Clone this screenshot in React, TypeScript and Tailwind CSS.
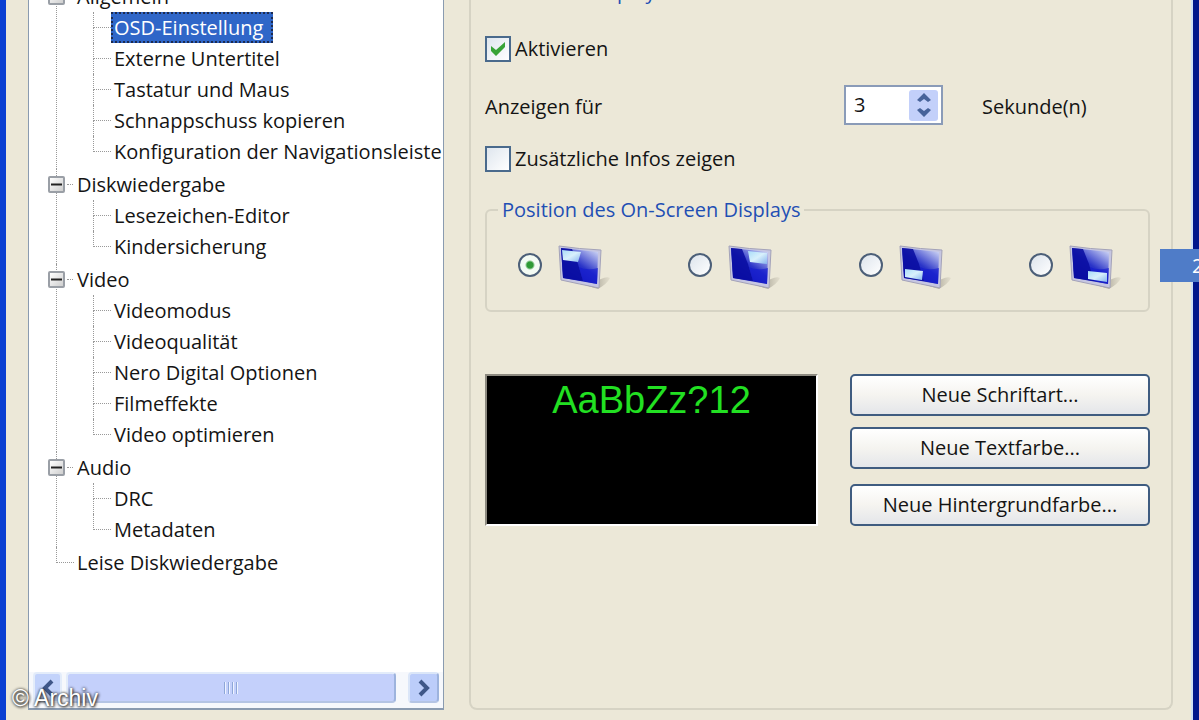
import { useState } from 'react'

type Corner = 'tl' | 'tr' | 'bl' | 'br'

type TreeGroup = { label: string; children: string[] }

const TREE: TreeGroup[] = [
  {
    label: 'Allgemein',
    children: [
      'OSD-Einstellung',
      'Externe Untertitel',
      'Tastatur und Maus',
      'Schnappschuss kopieren',
      'Konfiguration der Navigationsleiste',
    ],
  },
  { label: 'Diskwiedergabe', children: ['Lesezeichen-Editor', 'Kindersicherung'] },
  {
    label: 'Video',
    children: ['Videomodus', 'Videoqualität', 'Nero Digital Optionen', 'Filmeffekte', 'Video optimieren'],
  },
  { label: 'Audio', children: ['DRC', 'Metadaten'] },
]

const CORNERS: { value: Corner; label: string; patch: string }[] = [
  { value: 'tl', label: 'Oben links', patch: '5,6 24,8 21,18 6,16' },
  { value: 'tr', label: 'Oben rechts', patch: '21,7 40,9 40,20 23,18' },
  { value: 'bl', label: 'Unten links', patch: '7,25 25,27 24,36 7,33' },
  { value: 'br', label: 'Unten rechts', patch: '20,27 39,29 39,38 20,35' },
]

// Elbow of the dotted guide line in front of a tree entry
function Elbow({ last = false }: { last?: boolean }) {
  return (
    <span className="flex h-[31px] w-[18px] shrink-0 flex-col">
      <span className="h-4 border-b border-l border-dotted border-[#999]" />
      {!last && <span className="flex-1 border-l border-dotted border-[#999]" />}
    </span>
  )
}

function Monitor({ id, patch }: { id: Corner; patch: string }) {
  return (
    <svg width="54" height="54" viewBox="0 -6 54 54" aria-hidden="true">
      <defs>
        <linearGradient id={`screen-${id}`} x1="0.2" y1="1" x2="0.9" y2="0">
          <stop offset="0" stopColor="#0a0ca8" />
          <stop offset="0.5" stopColor="#2a34c8" />
          <stop offset="1" stopColor="#d3daf6" />
        </linearGradient>
        <linearGradient id={`patch-${id}`} x1="0" y1="0" x2="1" y2="1">
          <stop offset="0" stopColor="#a9dcf8" />
          <stop offset="0.5" stopColor="#d8f0fc" />
          <stop offset="1" stopColor="#86b4ee" />
        </linearGradient>
        <linearGradient id={`shade-${id}`} x1="0" y1="0" x2="1" y2="0">
          <stop offset="0" stopColor="#6f6b63" />
          <stop offset="1" stopColor="#c9c4b2" stopOpacity="0.3" />
        </linearGradient>
      </defs>
      <path d="M28 41 L44 35 Q50 32 53 34 Q50 40 41 45 Z" fill={`url(#shade-${id})`} />
      <path d="M2 2 Q22 5 44 6 L42 44 Q22 40 4 36 Z" fill="#c6c6e2" stroke="#a3a2b8" strokeWidth="1" />
      <path d="M4 4 L41 8 L40 40 L6 34 Z" fill={`url(#screen-${id})`} />
      <path d="M4 4 L15 5 L21 20 L26 37 L6 34 Z" fill="#080ca0" opacity="0.85" />
      <path d="M26 37 L40 40 L41 24 Q30 27 22 23 Z" fill="#1219d0" opacity="0.6" />
      <polygon points={patch} fill={`url(#patch-${id})`} />
    </svg>
  )
}

function CheckField({ label, checked, onChange }: { label: string; checked: boolean; onChange: (v: boolean) => void }) {
  return (
    <label className="flex w-fit items-center gap-1">
      <span className="grid">
        <input
          type="checkbox"
          checked={checked}
          onChange={(e) => onChange(e.target.checked)}
          className="size-[26px] appearance-none border-2 border-[#4a6a8c] bg-linear-to-br from-[#dfe6ee] to-white [grid-area:1/1]"
        />
        {checked && (
          <svg viewBox="0 0 26 26" className="pointer-events-none size-[26px] [grid-area:1/1]" aria-hidden="true">
            <path d="M6 10 L11 14 L20 6 L20 11 L11 20 L6 15 Z" fill="#37a336" />
          </svg>
        )}
      </span>
      {label}
    </label>
  )
}

const BUTTON =
  'h-[42px] w-full rounded-[5px] border-2 border-[#3f5c80] bg-linear-to-b from-white via-[#f5f4f0] to-[#e4e6ea]'

export default function App() {
  const [selected, setSelected] = useState('OSD-Einstellung')
  const [closed, setClosed] = useState<string[]>([])
  const [enabled, setEnabled] = useState(true)
  const [extra, setExtra] = useState(false)
  const [seconds, setSeconds] = useState(3)
  const [corner, setCorner] = useState<Corner>('tl')

  function toggle(label: string) {
    setClosed((prev) => (prev.includes(label) ? prev.filter((l) => l !== label) : [...prev, label]))
  }

  return (
    <main className="relative flex h-screen overflow-hidden border-l-[6px] border-[#0a3fd2] bg-[#ece8d8] font-['Open_Sans',sans-serif] text-[20px] leading-6 text-[#141414]">
      {/* Navigation tree */}
      <nav className="ml-[22px] mb-[10px] flex w-[416px] shrink-0 flex-col overflow-hidden border-x border-b-2 border-[#8a9bb0] bg-white">
        <ul className="-mt-[19px] flex-1 whitespace-nowrap pl-[27px]">
          {TREE.map((group) => (
            <li key={group.label} className="border-l border-dotted border-[#999] pb-0.5">
              <div className="-ml-[9px] flex h-[31px] items-center">
                <button
                  type="button"
                  aria-label={group.label}
                  onClick={() => toggle(group.label)}
                  className="grid size-[17px] place-items-center rounded-[2px] border-2 border-[#9a9fa6] bg-linear-to-br from-white to-[#cfcfcf]"
                >
                  <svg width="11" height="11" viewBox="0 0 11 11" aria-hidden="true">
                    <path d={closed.includes(group.label) ? 'M0 5.5 H11 M5.5 0 V11' : 'M0 5.5 H11'} stroke="#222" strokeWidth="2" />
                  </svg>
                </button>
                <span className="ml-0.5 w-[6px] border-b border-dotted border-[#999]" />
                <span className="ml-1">{group.label}</span>
              </div>
              {!closed.includes(group.label) && (
                <ul className="ml-[36px]">
                  {group.children.map((item, i) => (
                    <li key={item} className="flex items-center">
                      <Elbow last={i === group.children.length - 1} />
                      <button
                        type="button"
                        onClick={() => setSelected(item)}
                        className={
                          selected === item
                            ? 'h-[31px] border-2 border-dotted border-[#1d2b50] bg-[#2f66c8] pr-2 pl-px text-white'
                            : 'h-[31px] pl-[3px]'
                        }
                      >
                        {item}
                      </button>
                    </li>
                  ))}
                </ul>
              )}
            </li>
          ))}
          <li className="flex items-center">
            <Elbow last />
            <button type="button" className="pl-[3px]">
              Leise Diskwiedergabe
            </button>
          </li>
        </ul>

        {/* Horizontal scrollbar */}
        <div className="flex h-[36px] items-start bg-[#f6f8fc] px-1">
          <button type="button" aria-label="Nach links" className="grid h-[31px] w-[29px] place-items-center rounded-[4px] border-2 border-[#e3ecfa] bg-[#c3d3fb]">
            <svg width="14" height="18" viewBox="0 0 14 18" aria-hidden="true">
              <path d="M11 2 L4 9 L11 16" fill="none" stroke="#3f5788" strokeWidth="4" />
            </svg>
          </button>
          <div className="ml-1 flex h-[31px] flex-1 items-center justify-center gap-0.5 rounded-[4px] border-2 border-[#e3ecfa] border-r-[#9db3dd] border-b-[#b4c4e4] bg-[#c4d0fb]">
            {[0, 1, 2, 3].map((n) => (
              <span key={n} className="h-3 w-0.5 border-l border-[#8ea6d8] bg-[#eef3ff]" />
            ))}
          </div>
          <button type="button" aria-label="Nach rechts" className="ml-3 grid h-[31px] w-[31px] place-items-center rounded-[4px] border-2 border-[#dbe6f8] border-r-[#9db3dd] border-b-[#b4c4e4] bg-[#bccdfa]">
            <svg width="14" height="18" viewBox="0 0 14 18" aria-hidden="true">
              <path d="M3 2 L10 9 L3 16" fill="none" stroke="#3f5788" strokeWidth="4" />
            </svg>
          </button>
        </div>
      </nav>

      {/* OSD settings */}
      <section className="mr-[18px] mb-[10px] ml-[25px] flex-1 rounded-b-lg border-x-2 border-b-2 border-[#d6d3c4] pr-[21px] pl-[14px]">
        <h1 className="-mt-5 text-[#1f4fb4]">On-Screen Display</h1>

        <div className="mt-8">
          <CheckField label="Aktivieren" checked={enabled} onChange={setEnabled} />
        </div>

        <div className="mt-[23px] flex items-center">
          <label htmlFor="seconds" className="pt-1">Anzeigen für</label>
          <div className="ml-auto flex h-10 w-[99px] items-center border-2 border-[#8a9bb8] bg-white pr-[3px]">
            <input
              id="seconds"
              value={seconds}
              onChange={(e) => setSeconds(Number(e.target.value) || 0)}
              className="w-full min-w-0 bg-transparent pl-2 outline-none"
            />
            <div className="flex h-[31px] w-[29px] shrink-0 flex-col rounded-[3px] bg-[#c3d0fa]">
              <button type="button" aria-label="Mehr" onClick={() => setSeconds(seconds + 1)} className="grid flex-1 place-items-center">
                <svg width="14" height="9" viewBox="0 0 14 9" aria-hidden="true">
                  <path d="M7 0 L14 7 L11 9 L7 6 L3 9 L0 7 Z" fill="#47639a" />
                </svg>
              </button>
              <button type="button" aria-label="Weniger" onClick={() => setSeconds(Math.max(0, seconds - 1))} className="grid flex-1 place-items-center">
                <svg width="14" height="9" viewBox="0 0 14 9" aria-hidden="true">
                  <path d="M7 9 L14 2 L11 0 L7 3 L3 0 L0 2 Z" fill="#47639a" />
                </svg>
              </button>
            </div>
          </div>
          <span className="ml-[39px] w-[168px] pt-1">Sekunde(n)</span>
        </div>

        <div className="mt-[21px]">
          <CheckField label="Zusätzliche Infos zeigen" checked={extra} onChange={setExtra} />
        </div>

        <fieldset className="mt-[26px] rounded-md border-2 border-[#d6d3c4] pr-[26px] pb-[18px] pl-[31px]">
          <legend className="-ml-5 px-1 text-[#1f4fb4]">Position des On-Screen Displays</legend>
          <div className="mt-4 flex justify-between">
            {CORNERS.map(({ value, label, patch }) => (
              <label key={value} className="flex items-center gap-[15px]">
                <input
                  type="radio"
                  name="corner"
                  aria-label={label}
                  checked={corner === value}
                  onChange={() => setCorner(value)}
                  className="size-6 appearance-none rounded-full border-2 border-[#4c5f78] bg-linear-to-br from-[#dde4ec] to-white checked:bg-[radial-gradient(circle,#2f9a35_3px,#f4fbf4_5px)]"
                />
                <Monitor id={value} patch={patch} />
              </label>
            ))}
          </div>
        </fieldset>

        <div className="mt-[62px] flex gap-8">
          <div className="flex-1 border-2 border-t-[#8d8a80] border-r-white border-b-white border-l-[#8d8a80] bg-black text-center font-['Liberation_Sans',Arial,sans-serif] text-[38px] leading-[48px] text-[#22e022]">
            AaBbZz?12
          </div>
          <div className="w-[300px]">
            <button type="button" className={BUTTON}>Neue Schriftart...</button>
            <button type="button" className={`${BUTTON} mt-[11px]`}>Neue Textfarbe...</button>
            <button type="button" className={`${BUTTON} mt-[15px]`}>Neue Hintergrundfarbe...</button>
          </div>
        </div>
      </section>

      <div className="w-2 shrink-0 border-l-2 border-[#cfe0f4] bg-[#00168c]" />

      {/* Callout marker, cut by the window edge */}
      <div className="absolute top-[249px] right-0 w-[39px] overflow-hidden bg-[#4f7cc8] pl-8 leading-[33px] text-white">2</div>

      <div className="absolute bottom-2 left-[6px] font-['Liberation_Sans',Arial,sans-serif] text-[23px] leading-7 text-white [text-shadow:0_0_3px_#222,1px_1px_3px_#222]">
        © Archiv
      </div>
    </main>
  )
}
